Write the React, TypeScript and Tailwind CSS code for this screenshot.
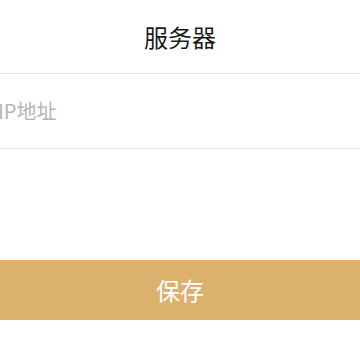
export default function App() {
  return (
    <div className="min-h-screen bg-white font-['Noto_Sans_CJK_SC',sans-serif]">
      <div className="h-[74px] flex items-center justify-center border-b border-[#e8e8e8]">
        <h1 className="text-[24px] text-[#1a1a1a] leading-none">服务器</h1>
      </div>
      <div className="h-[75px] flex items-center border-b border-[#e8e8e8]">
        <input
          className="w-full ml-[-2px] text-[20px] text-[#333] placeholder:text-[#b4b4b4] outline-none bg-transparent"
          placeholder="IP地址"
        />
      </div>
      <div className="mt-[111px]">
        <button className="w-full h-[60px] bg-[#dcb16e] text-white text-[24px]">
          保存
        </button>
      </div>
    </div>
  )
}
